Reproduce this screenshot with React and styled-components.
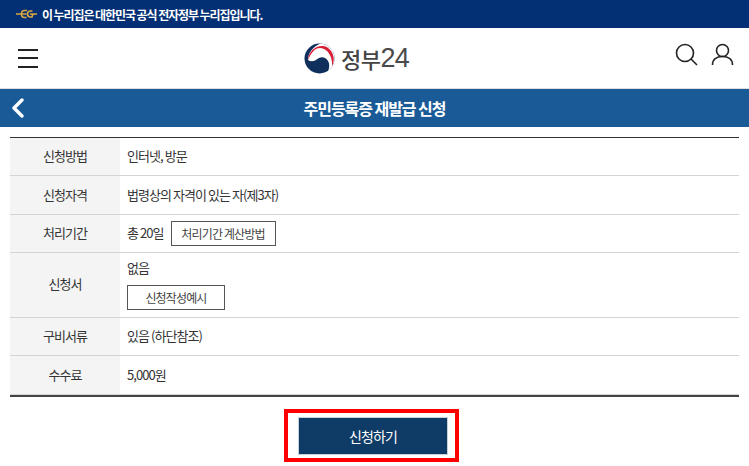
import React from 'react';
import styled, { createGlobalStyle } from 'styled-components';

const Global = createGlobalStyle`
  html, body { margin: 0; padding: 0; background: #fff; }
  body { font-family: "Noto Sans CJK KR", "Noto Sans", sans-serif; width: 749px; height: 466px; overflow: hidden; }
`;

const Page = styled.div`
  width: 749px;
  height: 466px;
  overflow: hidden;
  display: flex;
  flex-direction: column;
`;

const Notice = styled.div`
  height: 28px;
  background: #033074;
  display: flex;
  align-items: center;
  gap: 5px;
  padding-left: 16px;
  color: #fff;
  font-size: 12px;
  font-weight: 700;
  letter-spacing: -1.08px;
`;

const Header = styled.header`
  height: 61px;
  box-sizing: border-box;
  border-bottom: 1px solid #ddd;
  display: flex;
  align-items: center;
  justify-content: space-between;
  padding: 0 15px 0 18px;
  position: relative;
`;

const Menu = styled.div`
  width: 20px;
  display: flex;
  flex-direction: column;
  gap: 6.5px;
  span { display: block; height: 2px; background: #222; }
`;

const Logo = styled.div`
  position: absolute;
  left: 304px;
  top: 14px;
  display: flex;
  align-items: center;
  gap: 6px;
  color: #444;
  font-size: 22px;
  font-weight: 500;
  line-height: 32px;
`;

const LogoWord = styled.span`
  display: flex;
  align-items: center;
  letter-spacing: -0.5px;
`;

const LogoDigits = styled.span`
  font-family: "Liberation Sans", sans-serif;
  font-size: 27px;
  font-weight: 400;
  letter-spacing: -0.8px;
  color: #4a4a4a;
`;

const Tools = styled.div`
  display: flex;
  gap: 12px;
  margin-top: -7px;
`;

const TitleBar = styled.div`
  height: 38px;
  background: #195a97;
  color: #fff;
  font-size: 16px;
  font-weight: 700;
  letter-spacing: -1.05px;
  display: flex;
  align-items: center;
  justify-content: center;
  position: relative;
`;

const Back = styled.svg`
  position: absolute;
  left: 11px;
  top: 9px;
`;

const Table = styled.div`
  margin: 10px 10px 0;
  border-top: 1px solid #333;
  border-bottom: 2px solid #444;
`;

const Row = styled.div`
  display: grid;
  grid-template-columns: 110px 1fr;
  min-height: ${p => p.$h}px;
  box-sizing: border-box;
  border-bottom: 1px solid #d4d4d4;
`;

const Label = styled.div`
  background: #f4f4f4;
  display: flex;
  align-items: center;
  justify-content: center;
  padding-bottom: ${p => (p.$stack ? '4px' : '2px')};
  color: #333;
  font-size: 13px;
  letter-spacing: -0.95px;
`;

const Value = styled.div`
  display: flex;
  flex-direction: ${p => (p.$stack ? 'column' : 'row')};
  align-items: ${p => (p.$stack ? 'flex-start' : 'center')};
  gap: ${p => (p.$stack ? '8px' : '7px')};
  padding-left: 7px;
  padding-bottom: ${p => (p.$stack ? '2px' : '0')};
  justify-content: ${p => (p.$stack ? 'center' : 'flex-start')};
  color: #333;
  font-size: 13px;
  letter-spacing: -0.95px;
  > span { margin-bottom: ${p => (p.$stack ? '0' : '2px')}; }
`;

const OutlineButton = styled.div`
  box-sizing: border-box;
  height: 25px;
  width: ${p => p.$w}px;
  border: 1px solid #555;
  display: flex;
  align-items: center;
  justify-content: center;
  font-size: 12px;
  color: #444;
  letter-spacing: -0.85px;
`;

const Actions = styled.div`
  display: flex;
  justify-content: center;
  margin-top: 12px;
`;

const Highlight = styled.div`
  width: 175px;
  height: 53px;
  box-sizing: border-box;
  border: 4px solid #f00;
  display: flex;
  align-items: center;
  padding-left: 10px;
  margin-left: -6px;
`;

const Submit = styled.div`
  width: 150px;
  height: 38px;
  box-sizing: border-box;
  background: #0f3c66;
  border: 1px solid #c8d0d8;
  color: #fff;
  font-size: 14px;
  letter-spacing: -0.85px;
  display: flex;
  align-items: center;
  justify-content: center;
`;

const rows = [
  { label: '신청방법', value: '인터넷, 방문', h: 38 },
  { label: '신청자격', value: '법령상의 자격이 있는 자(제3자)', h: 39 },
  { label: '처리기간', value: '총 20일', button: '처리기간 계산방법', w: 105, h: 38 },
  { label: '신청서', value: '없음', button: '신청작성예시', w: 98, h: 65, stack: true },
  { label: '구비서류', value: '있음 (하단참조)', h: 38 },
  { label: '수수료', value: '5,000원', h: 39 },
];

export default function App() {
  return (
    <Page>
      <Global />
      <Notice>
        <svg width="21" height="10" viewBox="0 0 21 10" fill="none" stroke="#dca63f" strokeWidth="1.6">
          <path d="M0 5H5M11 1.5H8.5C6.5 1.5 5.5 3 5.5 5S6.5 8.5 8.5 8.5H10.5M6 5H10.5" />
          <path d="M16.5 2H14.5C12.5 2 11.5 3.3 11.5 5S12.5 8 14.5 8H16L17 5H14M17 5H21" />
        </svg>
        <span>이 누리집은 대한민국 공식 전자정부 누리집입니다.</span>
      </Notice>
      <Header>
        <Menu><span /><span /><span /></Menu>
        <Logo>
          <svg width="31" height="31" viewBox="0 0 31 31">
            <circle cx="15.5" cy="15.5" r="15" fill="#0f2f5c" />
            <path d="M4 17C4 9 10 3 17 0.5A15 15 0 0 1 30 19C29 23 27 26 24 28C25.5 25 25.5 21 24.5 19C23 14.5 18 13 15 15C12 17 8 20 4 17Z" fill="#fff" />
            <path d="M4 17C4.5 9 11 2.5 19 3C26 3.5 31 12 29.5 19C29 21 28.5 22 28 23C29 15 24 5 16 5C10 5 7 11 4 17Z" fill="#d81f36" />
          </svg>
          <LogoWord>정부<LogoDigits>24</LogoDigits></LogoWord>
        </Logo>
        <Tools>
          <svg width="24" height="24" viewBox="0 0 24 24" fill="none" stroke="#222" strokeWidth="1.6">
            <circle cx="10" cy="10" r="8.5" />
            <path d="M16 16L22 22" />
          </svg>
          <svg width="23" height="24" viewBox="0 0 23 24" fill="none" stroke="#222" strokeWidth="1.6">
            <circle cx="11.5" cy="7.5" r="6" />
            <path d="M1.5 22C1.5 16.5 5.5 13.5 11.5 13.5S21.5 16.5 21.5 22" />
          </svg>
        </Tools>
      </Header>
      <TitleBar>
        <Back width="14" height="20" viewBox="0 0 14 20" fill="none" stroke="#fff" strokeWidth="3.4" strokeLinecap="round" strokeLinejoin="round">
          <path d="M11 2L3 10L11 18" />
        </Back>
        주민등록증 재발급 신청
      </TitleBar>
      <Table>
        {rows.map(r => (
          <Row key={r.label} $h={r.h}>
            <Label $stack={r.stack}>{r.label}</Label>
            <Value $stack={r.stack}>
              <span>{r.value}</span>
              {r.button && <OutlineButton $w={r.w}>{r.button}</OutlineButton>}
            </Value>
          </Row>
        ))}
      </Table>
      <Actions>
        <Highlight><Submit>신청하기</Submit></Highlight>
      </Actions>
    </Page>
  );
}
